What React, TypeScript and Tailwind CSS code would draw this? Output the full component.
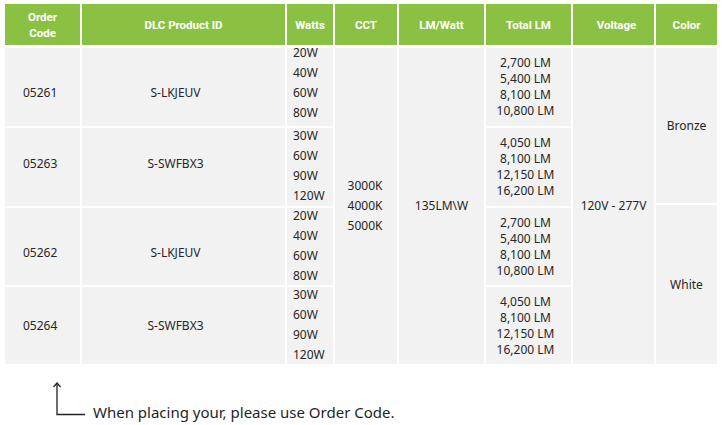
import React from "react";

/* ---------------- DATA ---------------- */
interface Row {
  code: string;
  productId: string;
  watts: string[];
  lumens: string[];
  codeShift: number;
  wattsShift: number;
}

const ROWS: Row[] = [
  { code: "05261", productId: "S-LKJEUV", watts: ["20W", "40W", "60W", "80W"], lumens: ["2,700 LM", "5,400 LM", "8,100 LM", "10,800 LM"], codeShift: 6, wattsShift: -5 },
  { code: "05263", productId: "S-SWFBX3", watts: ["30W", "60W", "90W", "120W"], lumens: ["4,050 LM", "8,100 LM", "12,150 LM", "16,200 LM"], codeShift: -3, wattsShift: -2 },
  { code: "05262", productId: "S-LKJEUV", watts: ["20W", "40W", "60W", "80W"], lumens: ["2,700 LM", "5,400 LM", "8,100 LM", "10,800 LM"], codeShift: 6, wattsShift: -2 },
  { code: "05264", productId: "S-SWFBX3", watts: ["30W", "60W", "90W", "120W"], lumens: ["4,050 LM", "8,100 LM", "12,150 LM", "16,200 LM"], codeShift: 0, wattsShift: -2 },
];

const ROW_HEIGHTS = ["h-[78px]", "h-[78px]", "h-[77px]", "h-[77px]"];

const cell = "bg-[#f2f2f2]";
const head = "bg-[#8bc143] flex items-center justify-center";

/* ---------------- COMPONENT ---------------- */
const App: React.FC = () => {
  return (
    <div
      className="w-[724px] h-[425px] bg-white text-[#262626] overflow-hidden"
      style={{ fontFamily: '"Noto Sans", "Open Sans", sans-serif' }}
    >
      <div className="ml-[5px] pt-[4px] w-[712px]">
        {/* Header */}
        <div
          className="flex gap-[2px] h-[41px] text-white font-bold text-[11.5px] leading-[16px]"
          style={{ fontFamily: 'Roboto, "Noto Sans", sans-serif' }}
        >
          <div className={`w-[75px] ${head} text-center`}>
            Order
            <br />
            Code
          </div>
          <div className={`w-[203px] ${head}`}>DLC Product ID</div>
          <div className={`w-[46px] ${head}`}>Watts</div>
          <div className={`w-[62px] ${head}`}>CCT</div>
          <div className={`w-[85px] ${head}`}>LM/Watt</div>
          <div className={`w-[85px] ${head}`}>Total LM</div>
          <div className={`w-[81px] ${head} pl-[6px]`}>Voltage</div>
          <div className={`w-[61px] ${head}`}>Color</div>
        </div>

        {/* Body */}
        <div className="flex gap-[2px] h-[316px] mt-[3px] text-[12px]">
          {/* Order code */}
          <div className="w-[75px] flex flex-col gap-[2px]">
            {ROWS.map((r, i) => (
              <div key={i} className={`${cell} ${ROW_HEIGHTS[i]} flex items-center pl-[18px]`}>
                <span style={{ transform: `translateY(${r.codeShift}px)` }}>{r.code}</span>
              </div>
            ))}
          </div>

          {/* DLC product id */}
          <div className="w-[203px] flex flex-col gap-[2px]">
            {ROWS.map((r, i) => (
              <div key={i} className={`${cell} ${ROW_HEIGHTS[i]} flex items-center justify-center pr-[16px]`}>
                <span style={{ transform: `translateY(${r.codeShift}px)` }}>{r.productId}</span>
              </div>
            ))}
          </div>

          {/* Watts */}
          <div className="w-[46px] flex flex-col gap-[2px]">
            {ROWS.map((r, i) => (
              <div key={i} className={`${cell} ${ROW_HEIGHTS[i]} pl-[6px] leading-[20px]`}>
                <div style={{ marginTop: r.wattsShift }}>
                  {r.watts.map((w) => (
                    <div key={w}>{w}</div>
                  ))}
                </div>
              </div>
            ))}
          </div>

          {/* CCT */}
          <div className={`w-[62px] ${cell} flex flex-col items-center justify-center leading-[20px] pr-[2px]`}>
            <div>3000K</div>
            <div>4000K</div>
            <div>5000K</div>
          </div>

          {/* LM/Watt */}
          <div className={`w-[85px] ${cell} flex items-center justify-center`}>135LM\W</div>

          {/* Total LM */}
          <div className="w-[85px] flex flex-col gap-[2px]">
            {ROWS.map((r, i) => (
              <div
                key={i}
                className={`${cell} ${ROW_HEIGHTS[i]} flex flex-col items-center justify-center leading-[16px] pr-[6px]`}
              >
                {r.lumens.map((l) => (
                  <div key={l}>{l}</div>
                ))}
              </div>
            ))}
          </div>

          {/* Voltage */}
          <div className={`w-[81px] ${cell} flex items-center justify-center`}>120V - 277V</div>

          {/* Color */}
          <div className="w-[61px] flex flex-col gap-[2px]">
            <div className={`${cell} h-[155px] flex items-center justify-center`}>Bronze</div>
            <div className={`${cell} flex-1 flex items-center justify-center`}>White</div>
          </div>
        </div>
      </div>

      {/* Footer note */}
      <div className="flex items-end ml-[52px] mt-[18px]">
        <svg width="36" height="34" viewBox="0 0 36 34" className="shrink-0">
          <path d="M5 1 V32.5 H33" fill="none" stroke="#222" strokeWidth="1.3" />
          <path d="M1.5 5 L5 1 L8.5 5" fill="none" stroke="#222" strokeWidth="1.3" />
        </svg>
        <div className="ml-[5px] text-[15px] leading-[20px] mb-[-6px] text-[#1f1f1f]">
          When placing your, please use Order Code.
        </div>
      </div>
    </div>
  );
};

export default App;
